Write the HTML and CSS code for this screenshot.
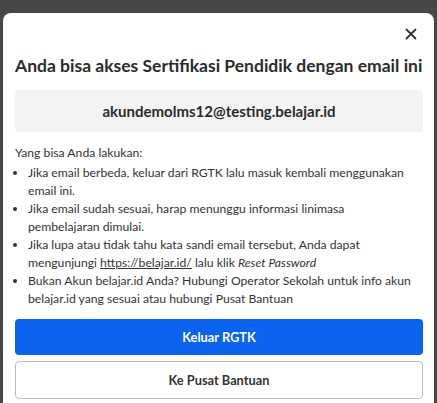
FILE: index.html
```html
<!DOCTYPE html>
<html lang="id">
<head>
<meta charset="utf-8">
<link rel="stylesheet" href="styles.css">
</head>
<body>
<div class="modal">
  <div class="close-row">
    <svg class="close" width="12" height="12" viewBox="0 0 12 12"><path d="M1.5 1.5L10.5 10.5M10.5 1.5L1.5 10.5" stroke="#333" stroke-width="1.8" stroke-linecap="round"/></svg>
  </div>
  <h1 class="title">Anda bisa akses Sertifikasi Pendidik dengan email ini</h1>
  <div class="email">akundemolms12@testing.belajar.id</div>
  <p class="lead">Yang bisa Anda lakukan:</p>
  <ul class="list">
    <li>Jika email berbeda, keluar dari RGTK lalu masuk kembali menggunakan email ini.</li>
    <li>Jika email sudah sesuai, harap menunggu informasi linimasa<br>pembelajaran dimulai.</li>
    <li>Jika lupa atau tidak tahu kata sandi email tersebut, Anda dapat mengunjungi <a href="#">https://belajar.id/</a> lalu klik <em>Reset Password</em></li>
    <li>Bukan Akun belajar.id Anda? Hubungi Operator Sekolah untuk info akun belajar.id yang sesuai atau hubungi Pusat Bantuan</li>
  </ul>
  <div class="actions">
    <button class="btn primary">Keluar RGTK</button>
    <button class="btn outline">Ke Pusat Bantuan</button>
  </div>
</div>
</body>
</html>
```
FILE: styles.css
```css
html, body {
  margin: 0;
  padding: 0;
  background: #474747;
  height: 100%;
  overflow: hidden;
}
.modal {
  margin: 13px 3px 0 3px;
  background: #fff;
  border-radius: 8px 8px 0 0;
  padding: 0 11px 0 12px;
  font-family: Lato, sans-serif;
  color: #333;
  height: 400px;
}
.close-row {
  display: flex;
  justify-content: flex-end;
  padding: 15px 6px 0 0;
  height: 14px;
}
.close {
  display: block;
}
.title {
  margin: 12px 0 0 0;
  font-size: 17.5px;
  font-weight: 700;
  line-height: 24px;
  color: #2b2b2b;
  white-space: nowrap;
}
.email {
  margin-top: 12px;
  background: #f3f3f3;
  border-radius: 4px;
  height: 42px;
  display: flex;
  align-items: center;
  justify-content: center;
  font-size: 15px;
  font-weight: 700;
  color: #2b2b2b;
}
.lead {
  margin: 12px 0 2px 0;
  font-size: 12.2px;
  line-height: 18px;
}
.list {
  margin: 0;
  padding-left: 13px;
  font-size: 12.2px;
  line-height: 18px;
}
.list a {
  color: #333;
  text-underline-offset: 1px;
}
.actions {
  margin-top: 11px;
  display: flex;
  flex-direction: column;
  gap: 6px;
}
.btn {
  font-family: Lato, sans-serif;
  font-size: 12.8px;
  font-weight: 700;
  border-radius: 4px;
  height: 36px;
  width: 408px;
  padding: 0;
}
.primary {
  background: #0b63ee;
  color: #fff;
  border: none;
}
.outline {
  background: #fff;
  color: #333;
  border: 1px solid #bdbdbd;
  height: 38px;
}
```
